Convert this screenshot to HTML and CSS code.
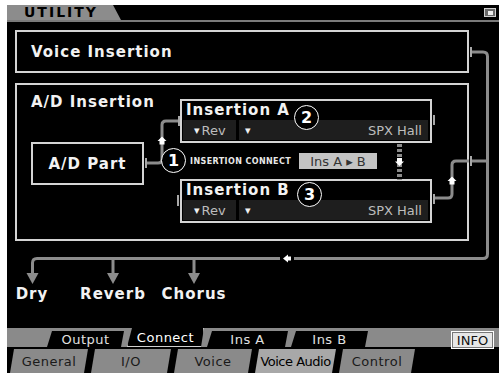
FILE: index.html
```html
<!DOCTYPE html>
<html lang="en">
<head>
  <meta charset="UTF-8" />
  <title>Utility - Connect</title>
  <link rel="stylesheet" href="styles.css">
</head>
<body>
  <div class="screen">
    <div class="topbar">
      <div class="title-tab">UTILITY</div>
      <div class="corner-icon"><span></span></div>
    </div>

    <div class="voice-box">
      <span class="node-title">Voice Insertion</span>
    </div>

    <div class="ad-box">
      <div class="ad-left">
        <div class="node-title line">A/D Insertion</div>
        <div class="ad-part"><span class="node-title">A/D Part</span></div>
      </div>
      <div class="ad-right">
        <div class="ins">
          <div class="node-title ins-title">Insertion A</div>
          <div class="ins-row">
            <div class="cell cell-fx"><span class="tri">▾</span>Rev</div>
            <div class="cell cell-type"><span class="tri">▾</span><span>SPX Hall</span></div>
          </div>
        </div>
        <div class="connect-row">
          <span class="connect-label">INSERTION CONNECT</span>
          <span class="connect-btn">Ins A ▸ B</span>
        </div>
        <div class="ins">
          <div class="node-title ins-title">Insertion B</div>
          <div class="ins-row">
            <div class="cell cell-fx"><span class="tri">▾</span>Rev</div>
            <div class="cell cell-type"><span class="tri">▾</span><span>SPX Hall</span></div>
          </div>
        </div>
      </div>
    </div>

    <div class="outputs">
      <div class="out node-title">Dry</div>
      <div class="out node-title">Reverb</div>
      <div class="out node-title">Chorus</div>
    </div>

    <div class="tabs">
      <div class="tabrow1">
        <div class="tab1">Output</div>
        <div class="tab1 active">Connect</div>
        <div class="tab1 wide">Ins A</div>
        <div class="tab1">Ins B</div>
        <div class="info">INFO</div>
      </div>
      <div class="tabrow2">
        <div class="tab2">General</div>
        <div class="tab2 wide">I/O</div>
        <div class="tab2">Voice</div>
        <div class="tab2 active">Voice Audio</div>
        <div class="tab2 narrow">Control</div>
      </div>
    </div>

    <!-- wiring between the blocks -->
    <svg class="wires" width="492" height="368" viewBox="0 0 492 368">
      <g fill="none" stroke="#8c8c8c" stroke-width="3">
        <path d="M464,47 H476 Q480.5,47 480.5,51.5 V249 Q480.5,253.5 476,253.5 H30 Q25.5,253.5 25.5,258 V269" />
        <path d="M106,253.5 V269 M187,253.5 V269" />
        <path d="M464,156 H480" />
        <path d="M140,158 H151 Q155,158 155,154 V120 Q155,116 159,116 H171" />
        <path d="M428,193 H441 Q445,193 445,189 V160 Q445,156 449,156 H462" />
        <path d="M392.5,139 V175" stroke-width="5" stroke-dasharray="3 2" />
      </g>
      <g fill="#8c8c8c">
        <path d="M19.5,268 H31.5 L25.5,279 Z" />
        <path d="M100,268 H112 L106,279 Z" />
        <path d="M181,268 H193 L187,279 Z" />
      </g>
      <g fill="#a8a8a8">
        <rect x="463" y="42" width="2" height="10" />
        <rect x="463" y="151" width="2" height="10" />
        <rect x="138" y="153" width="2" height="10" />
        <rect x="171" y="111" width="2" height="10" />
        <rect x="426" y="110" width="2" height="10" />
        <rect x="170" y="190" width="2" height="11" />
        <rect x="426" y="189" width="2" height="10" />
      </g>
      <rect x="273" y="250" width="14" height="7" fill="#000" />
      <g fill="#fff">
        <path d="M276,253.5 L281,249.5 V251.5 H284 V255.5 H281 V257.5 Z" />
        <path d="M155,131.5 L159.5,136 H157.5 V139.5 H152.5 V136 H150.5 Z" />
        <path d="M445,171.5 L449.5,176 H447.5 V179.5 H442.5 V176 H440.5 Z" />
        <path d="M392.5,161 L397,156.5 H395 V153 H390 V156.5 H388 Z" />
      </g>
    </svg>

    <span class="marker m1">1</span>
    <span class="marker m2">2</span>
    <span class="marker m3">3</span>
  </div>
</body>
</html>
```

FILE: styles.css
```css
* {
  box-sizing: border-box;
}

body {
  margin: 0;
  background: #fff;
  font-family: "DejaVu Sans", "Liberation Sans", sans-serif;
}

.screen {
  position: relative;
  margin: 5px 0 0 7px;
  width: 492px;
  height: 368px;
  background: #000;
  display: flex;
  flex-direction: column;
  overflow: hidden;
}

/* header */
.topbar {
  height: 17px;
  border-bottom: 2px solid #7a7a7a;
  display: flex;
  justify-content: space-between;
  align-items: flex-start;
}

.title-tab {
  position: relative;
  width: 106px;
  height: 15px;
  padding-left: 17px;
  background: #8c8c8c;
  color: #000;
  font-weight: bold;
  font-size: 14px;
  line-height: 15px;
  letter-spacing: 2px;
  white-space: nowrap;
}

.title-tab::after {
  content: "";
  position: absolute;
  left: 106px;
  top: 0;
  border-bottom: 15px solid #8c8c8c;
  border-right: 8px solid transparent;
}

.corner-icon {
  width: 12px;
  height: 9px;
  margin: 3px 3px 0 0;
  border: 1px solid #d0d0d0;
  background: #6a6a6a;
  display: flex;
  align-items: center;
  justify-content: center;
}

.corner-icon span {
  width: 5px;
  height: 4px;
  background: #eee;
}

/* blocks */
.node-title {
  font-weight: bold;
  font-size: 15px;
  letter-spacing: 1px;
  color: #f2f2f2;
  white-space: nowrap;
}

.line {
  line-height: 18px;
}

.voice-box {
  margin: 8px 0 0 8px;
  width: 454px;
  height: 43px;
  border: 2px solid #d4d4d4;
  padding-left: 14px;
  display: flex;
  align-items: center;
}

.ad-box {
  margin: 10px 0 0 8px;
  width: 454px;
  height: 158px;
  border: 2px solid #d4d4d4;
  padding-left: 14px;
  display: flex;
  align-items: flex-start;
}

.ad-left {
  width: 113px;
  flex-shrink: 0;
  padding-top: 8px;
}

.ad-part {
  margin-top: 31px;
  height: 43px;
  border: 2px solid #d4d4d4;
  display: flex;
  align-items: center;
  justify-content: center;
}

.ad-right {
  margin-left: 36px;
  width: 252px;
  flex-shrink: 0;
  padding-top: 14px;
}

.ins {
  height: 44px;
  border: 2px solid #d4d4d4;
}

.ins-title {
  height: 19px;
  line-height: 19px;
  padding-left: 4px;
}

.ins-row {
  display: flex;
  gap: 3px;
  height: 20px;
  margin: 0 2px 0 1px;
}

.cell {
  background: #1e1e1e;
  color: #bdbdbd;
  font-size: 13px;
  display: flex;
  align-items: center;
}

.tri {
  color: #f0f0f0;
  font-size: 11px;
  margin-right: 2px;
}

.cell-fx {
  width: 53px;
  padding-left: 11px;
}

.cell-type {
  flex: 1;
  padding: 0 6px;
  justify-content: space-between;
}

.connect-row {
  margin: 10px 0;
  height: 16px;
  padding-left: 10px;
  display: flex;
  align-items: center;
}

.connect-label {
  width: 109px;
  font-size: 8px;
  font-weight: bold;
  letter-spacing: 0.4px;
  color: #e8e8e8;
  white-space: nowrap;
}

.connect-btn {
  width: 78px;
  height: 16px;
  background: #c4c4c4;
  color: #333;
  font-size: 13px;
  display: flex;
  align-items: center;
  justify-content: center;
}

.outputs {
  margin-top: 44px;
  display: flex;
  gap: 31px;
}

.out {
  width: 50px;
  line-height: 18px;
  display: flex;
  justify-content: center;
}

/* bottom tabs */
.tabs {
  margin-top: auto;
}

.tabrow1 {
  height: 19px;
  background: #8a8a8a;
  padding-left: 40px;
  display: flex;
  align-items: flex-end;
  gap: 3px;
}

.tab1 {
  width: 77px;
  height: 16px;
  background: #000;
  color: #e0e0e0;
  font-size: 13px;
  letter-spacing: 0.5px;
  clip-path: polygon(5px 0, 100% 0, calc(100% - 3px) 100%, 0 100%);
  display: flex;
  align-items: center;
  justify-content: center;
}

.tab1.wide {
  width: 81px;
}

.tab1.active {
  height: 19px;
  color: #fff;
  border: 1px solid #cfcfcf;
  border-top: none;
}

.info {
  margin: 3px 5px 0 auto;
  align-self: flex-start;
  width: 43px;
  height: 18px;
  background: #e6e6e6;
  border: 1px solid #fff;
  box-shadow: inset 0 0 0 1px #777;
  color: #111;
  font-size: 13px;
  display: flex;
  align-items: center;
  justify-content: center;
}

.tabrow2 {
  margin-top: 2px;
  height: 24px;
  padding-left: 3px;
  display: flex;
  gap: 3px;
}

.tab2 {
  width: 78px;
  background: #8a8a8a;
  color: #1a1a1a;
  font-size: 13px;
  letter-spacing: 0.5px;
  clip-path: polygon(4px 0, 100% 0, calc(100% - 4px) 100%, 0 100%);
  display: flex;
  align-items: center;
  justify-content: center;
}

.tab2.wide {
  width: 80px;
}

.tab2.narrow {
  width: 76px;
}

.tab2.active {
  width: 81px;
  background: #a8a8a8;
  color: #000;
  letter-spacing: -0.5px;
}

/* overlay */
.wires {
  position: absolute;
  left: 0;
  top: 0;
  pointer-events: none;
}

.marker {
  position: absolute;
  width: 25px;
  height: 25px;
  border: 1.5px solid #fff;
  border-radius: 50%;
  background: #000;
  color: #fff;
  font-weight: bold;
  font-size: 16px;
  display: flex;
  align-items: center;
  justify-content: center;
}

.m1 { left: 154px; top: 143px; }
.m2 { left: 287px; top: 100px; }
.m3 { left: 290px; top: 177px; }
```
